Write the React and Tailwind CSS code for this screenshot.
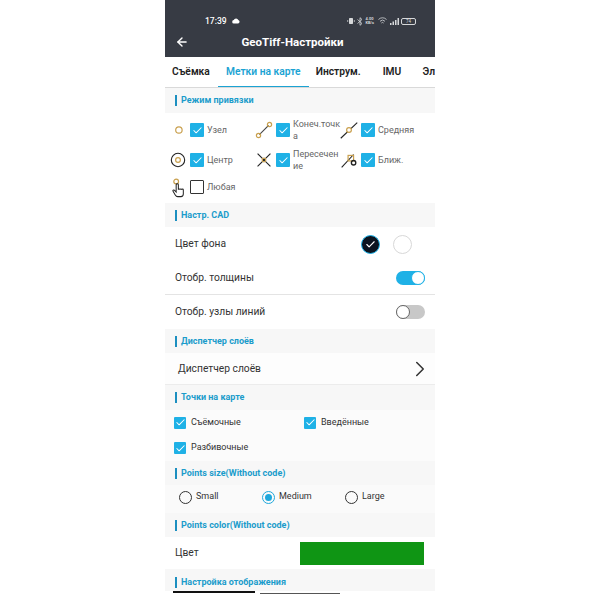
import React from 'react';
import { ArrowLeft, ChevronRight, Check } from 'lucide-react';

const SNAP = [
  { label: 'Узел', icon: 'node', on: true },
  { label: 'Конеч.точка', icon: 'end', on: true },
  { label: 'Средняя', icon: 'mid', on: true },
  { label: 'Центр', icon: 'center', on: true },
  { label: 'Пересечение', icon: 'cross', on: true },
  { label: 'Ближ.', icon: 'near', on: true },
  { label: 'Любая', icon: 'any', on: false },
];

const GOLD = '#c9a04e';

function SnapIcon({ name }) {
  return (
    <svg width="24" height="24" viewBox="0 0 24 24" fill="none" stroke="#222" strokeWidth="1.2">
      {name === 'node' && <circle cx="13" cy="12" r="3.5" stroke={GOLD} strokeWidth="1.3" />}
      {name === 'end' && (
        <>
          <line x1="7" y1="17" x2="17" y2="7" stroke="#444" />
          <circle cx="6" cy="18" r="2.3" stroke={GOLD} strokeWidth="1.3" />
          <circle cx="18" cy="6" r="2.3" stroke={GOLD} strokeWidth="1.3" />
        </>
      )}
      {name === 'mid' && (
        <>
          <line x1="3" y1="21" x2="21" y2="4" />
          <circle cx="12" cy="12" r="2.6" fill="#fff" stroke={GOLD} strokeWidth="1.3" />
        </>
      )}
      {name === 'center' && (
        <>
          <circle cx="12" cy="12" r="7.3" />
          <circle cx="12" cy="12" r="2.6" stroke={GOLD} strokeWidth="1.3" />
        </>
      )}
      {name === 'cross' && (
        <>
          <line x1="5" y1="5" x2="19" y2="19" />
          <line x1="19" y1="5" x2="5" y2="19" />
          <circle cx="12" cy="12" r="2" stroke={GOLD} strokeWidth="1.3" />
        </>
      )}
      {name === 'near' && (
        <>
          <line x1="4" y1="20" x2="17" y2="6" />
          <rect x="11" y="7" width="6" height="6" stroke={GOLD} strokeWidth="1.3" />
          <circle cx="17" cy="15" r="2.4" strokeWidth="1.5" />
        </>
      )}
      {name === 'any' && (
        <>
          <circle cx="10" cy="6" r="2.6" stroke={GOLD} strokeWidth="1.3" />
          <path d="M10 9.500v8l-2-2c-1-.8-2 .2-1.400 1.200l2.400 4c.6 1 1.400 1.800 2.600 1.800h3.600c1.600 0 2.600-1.200 2.600-2.800v-4.600c0-1.200-1.600-1.200-1.800 0 0-1.200-1.800-1.200-1.800 0 0-1.200-1.800-1.200-1.800 0V9.500c0-1.400-2.400-1.400-2.400 0z" fill="#fff" strokeWidth="1.100" />
        </>
      )}
    </svg>
  );
}

function Box({ on, size = 'w-[14px] h-[14px]' }) {
  if (!on) return <span className={`${size} shrink-0 border border-[#333] rounded-[1px] bg-white`} />;
  return (
    <span className={`${size} shrink-0 bg-[#1fb1e6] rounded-[1px] flex items-center justify-center`}>
      <Check size={11} strokeWidth={2.2} color="#fff" />
    </span>
  );
}

function Section({ title, className = 'h-6' }) {
  return (
    <div className={`${className} bg-[#f7f7f7] flex items-center pl-[10px] shrink-0`}>
      <span className="w-[2px] h-[11px] bg-[#1c8fc0] mr-[4px]" />
      <span className="text-[9px] font-bold text-[#1b9ccb] leading-none">{title}</span>
    </div>
  );
}

function Toggle({ on }) {
  return (
    <span className={`w-[29px] h-[14px] rounded-full flex items-center ${on ? 'bg-[#1fb1e6] justify-end' : 'bg-[#c8c8c8] justify-start'}`}>
      <span className={`w-[14px] h-[14px] rounded-full bg-white border ${on ? 'border-[#1fb1e6]' : 'border-[#666]'}`} />
    </span>
  );
}

function Radio({ label, on, className }) {
  return (
    <div className={`flex items-center gap-[4px] ${className}`}>
      <span className={`w-[13px] h-[13px] rounded-full border-[1.5px] flex items-center justify-center ${on ? 'border-[#1fa8dc]' : 'border-[#333]'}`}>
        {on && <span className="w-[7px] h-[7px] rounded-full bg-[#1fa8dc]" />}
      </span>
      <span className="text-[9px] text-[#333]">{label}</span>
    </div>
  );
}

export default function App() {
  return (
    <div className="w-[600px] h-[600px] bg-white flex justify-center overflow-hidden font-['Roboto','Liberation_Sans',sans-serif]">
      <div className="w-[270px] flex flex-col">
        {/* status + title */}
        <div className="h-[57px] bg-[#373b44] text-white shrink-0 flex flex-col">
          <div className="h-[33px] pt-[9px] pl-[40px] pr-[19px] flex items-center justify-between">
            <div className="flex items-center gap-[5px]">
              <span className="text-[8.5px] font-medium">17:39</span>
              <svg width="8" height="6" viewBox="0 0 8 6"><path d="M2 5.500a1.700 1.700 0 0 1-.2-3.400A2.400 2.400 0 0 1 6.300 2 1.800 1.800 0 0 1 6 5.500z" fill="#fff" /></svg>
            </div>
            <div className="flex items-center gap-[2.5px] text-[#d6d8da]">
              <svg width="8" height="8" viewBox="0 0 8 8"><rect x="2" y="1" width="4" height="6" rx="0.7" fill="currentColor" /><path d="M0.700 3v2M7.300 3v2" stroke="currentColor" strokeWidth="0.7" /></svg>
              <svg width="6" height="9" viewBox="0 0 6 9" fill="none" stroke="currentColor" strokeWidth="0.8"><path d="M0.500 2.500l4.500 4L3 8.300V0.700l2 1.800L0.500 6.500" /></svg>
              <span className="text-[4px] leading-[4px] w-[10px] font-bold">4.00 KB/s</span>
              <svg width="9" height="8" viewBox="0 0 9 8" fill="none" stroke="currentColor" strokeWidth="0.8"><path d="M0.500 2.500a5.500 5.500 0 0 1 8 0M2 4.300a3.500 3.500 0 0 1 5 0M3.400 6a1.500 1.500 0 0 1 2.200 0" /></svg>
              <svg width="9" height="7" viewBox="0 0 9 7" fill="currentColor"><rect x="0" y="5" width="1.500" height="2" /><rect x="2.500" y="3.500" width="1.500" height="3.500" /><rect x="5" y="2" width="1.500" height="5" /><rect x="7.500" y="0" width="1.500" height="7" /></svg>
              <span className="w-[15px] h-[7px] border border-[#d6d8da] rounded-[2px] text-[4.500px] leading-[5px] text-center">74</span>
            </div>
          </div>
          <div className="h-[24px] relative flex items-center justify-center pb-[5px] pr-[15px]">
            <ArrowLeft size={14} strokeWidth={2.4} className="absolute left-[10px] top-[2px]" />
            <span className="text-[11.500px] font-bold">GeoTiff-Настройки</span>
          </div>
        </div>

        {/* tabs */}
        <div className="h-[31px] flex shrink-0 border-b border-b-[#d9d9d9] overflow-hidden bg-white text-[10.250px] font-semibold text-[#222]">
          <div className="w-[53px] pl-[7px] flex items-center">Съёмка</div>
          <div className="w-[91px] flex items-center justify-center text-[#1ba3d3] border-b-2 border-[#1ba3d3] -mb-px">Метки на карте</div>
          <div className="w-[67px] pl-[7px] flex items-center">Инструм.</div>
          <div className="w-[40px] pl-[7px] flex items-center">IMU</div>
          <div className="flex items-center pl-[7px]">Эл</div>
        </div>

        <Section title="Режим привязки" className="h-[25px]" />

        {/* snap grid */}
        <div className="bg-white grid grid-cols-[86px_85px_86px] grid-rows-[30px_30px_24px] pl-[4px] pt-[2px] h-[90px] shrink-0">
          {SNAP.map((s) => (
            <div key={s.label} className="flex items-center">
              <span className="w-[22px] shrink-0 flex justify-center -ml-[2px] mr-[1px]"><SnapIcon name={s.icon} /></span>
              <Box on={s.on} />
              <span className={`ml-[3px] shrink-0 text-[9px] leading-[12px] text-[#666] break-all ${s.label.length > 8 ? 'w-[50px]' : ''}`}>{s.label}</span>
            </div>
          ))}
        </div>

        <Section title="Настр. CAD" className="h-[24px]" />

        {/* cad settings */}
        <div className="bg-white shrink-0">
          <div className="h-[34px] pl-[10px] pr-[11px] flex items-center justify-between">
            <span className="text-[10.250px] text-[#333]">Цвет фона</span>
            <div className="flex items-center gap-[13px] mr-[12px]">
              <span className="w-[19px] h-[19px] rounded-full bg-[#0b1420] border border-[#1fb1e6] flex items-center justify-center">
                <Check size={11} strokeWidth={2.4} color="#fff" />
              </span>
              <span className="w-[19px] h-[19px] rounded-full bg-white border border-[#d8d8d8]" />
            </div>
          </div>
          <div className="h-[34px] pl-[10px] pr-[10px] flex items-center justify-between border-b border-[#e4e4e4]">
            <span className="text-[10.250px] text-[#333]">Отобр. толщины</span>
            <Toggle on />
          </div>
          <div className="h-[34px] pl-[10px] pr-[10px] flex items-center justify-between">
            <span className="text-[10.250px] text-[#333]">Отобр. узлы линий</span>
            <Toggle />
          </div>
        </div>

        <Section title="Диспетчер слоёв" className="h-[24px]" />

        <div className="h-[32px] shrink-0 bg-[#fdfdfd] border-b border-[#ececec] pl-[13px] pr-[2px] flex items-center justify-between">
          <span className="text-[10.250px] text-[#333]">Диспетчер слоёв</span>
          <ChevronRight size={26} strokeWidth={1.400} color="#333" />
        </div>

        <Section title="Точки на карте" className="h-[25px]" />

        <div className="bg-[#fbfbfb] grid grid-cols-[130px_130px] grid-rows-[25px_26px] pl-[9px] h-[51px] shrink-0">
          {['Съёмочные', 'Введённые', 'Разбивочные'].map((t) => (
            <div key={t} className="flex items-center gap-[5px]">
              <Box on size="w-[12px] h-[12px]" />
              <span className="text-[9px] text-[#333]">{t}</span>
            </div>
          ))}
        </div>

        <Section title="Points size(Without code)" className="h-[24px]" />

        <div className="h-[28px] bg-[#fafafa] flex items-center pl-[14px] pb-[4px] shrink-0">
          <Radio label="Small" className="w-[83px]" />
          <Radio label="Medium" on className="w-[83px]" />
          <Radio label="Large" />
        </div>

        <Section title="Points color(Without code)" className="h-[24px]" />

        <div className="h-[32px] bg-white flex items-center justify-between pl-[10px] pr-[11px] shrink-0">
          <span className="text-[10.250px] text-[#333]">Цвет</span>
          <span className="w-[124px] h-[23px] bg-[#0f9514]" />
        </div>

        <Section title="Настройка отображения" className="h-[22px] pt-[4px]" />

        {/* cut-off strip at the bottom edge */}
        <div className="flex items-start gap-[5px] pl-[8px] shrink-0">
          <span className="w-[82px] h-[2px] bg-[#111]" />
          <span className="w-[80px] h-px mt-[2px] bg-[#555]" />
        </div>
      </div>
    </div>
  );
}
